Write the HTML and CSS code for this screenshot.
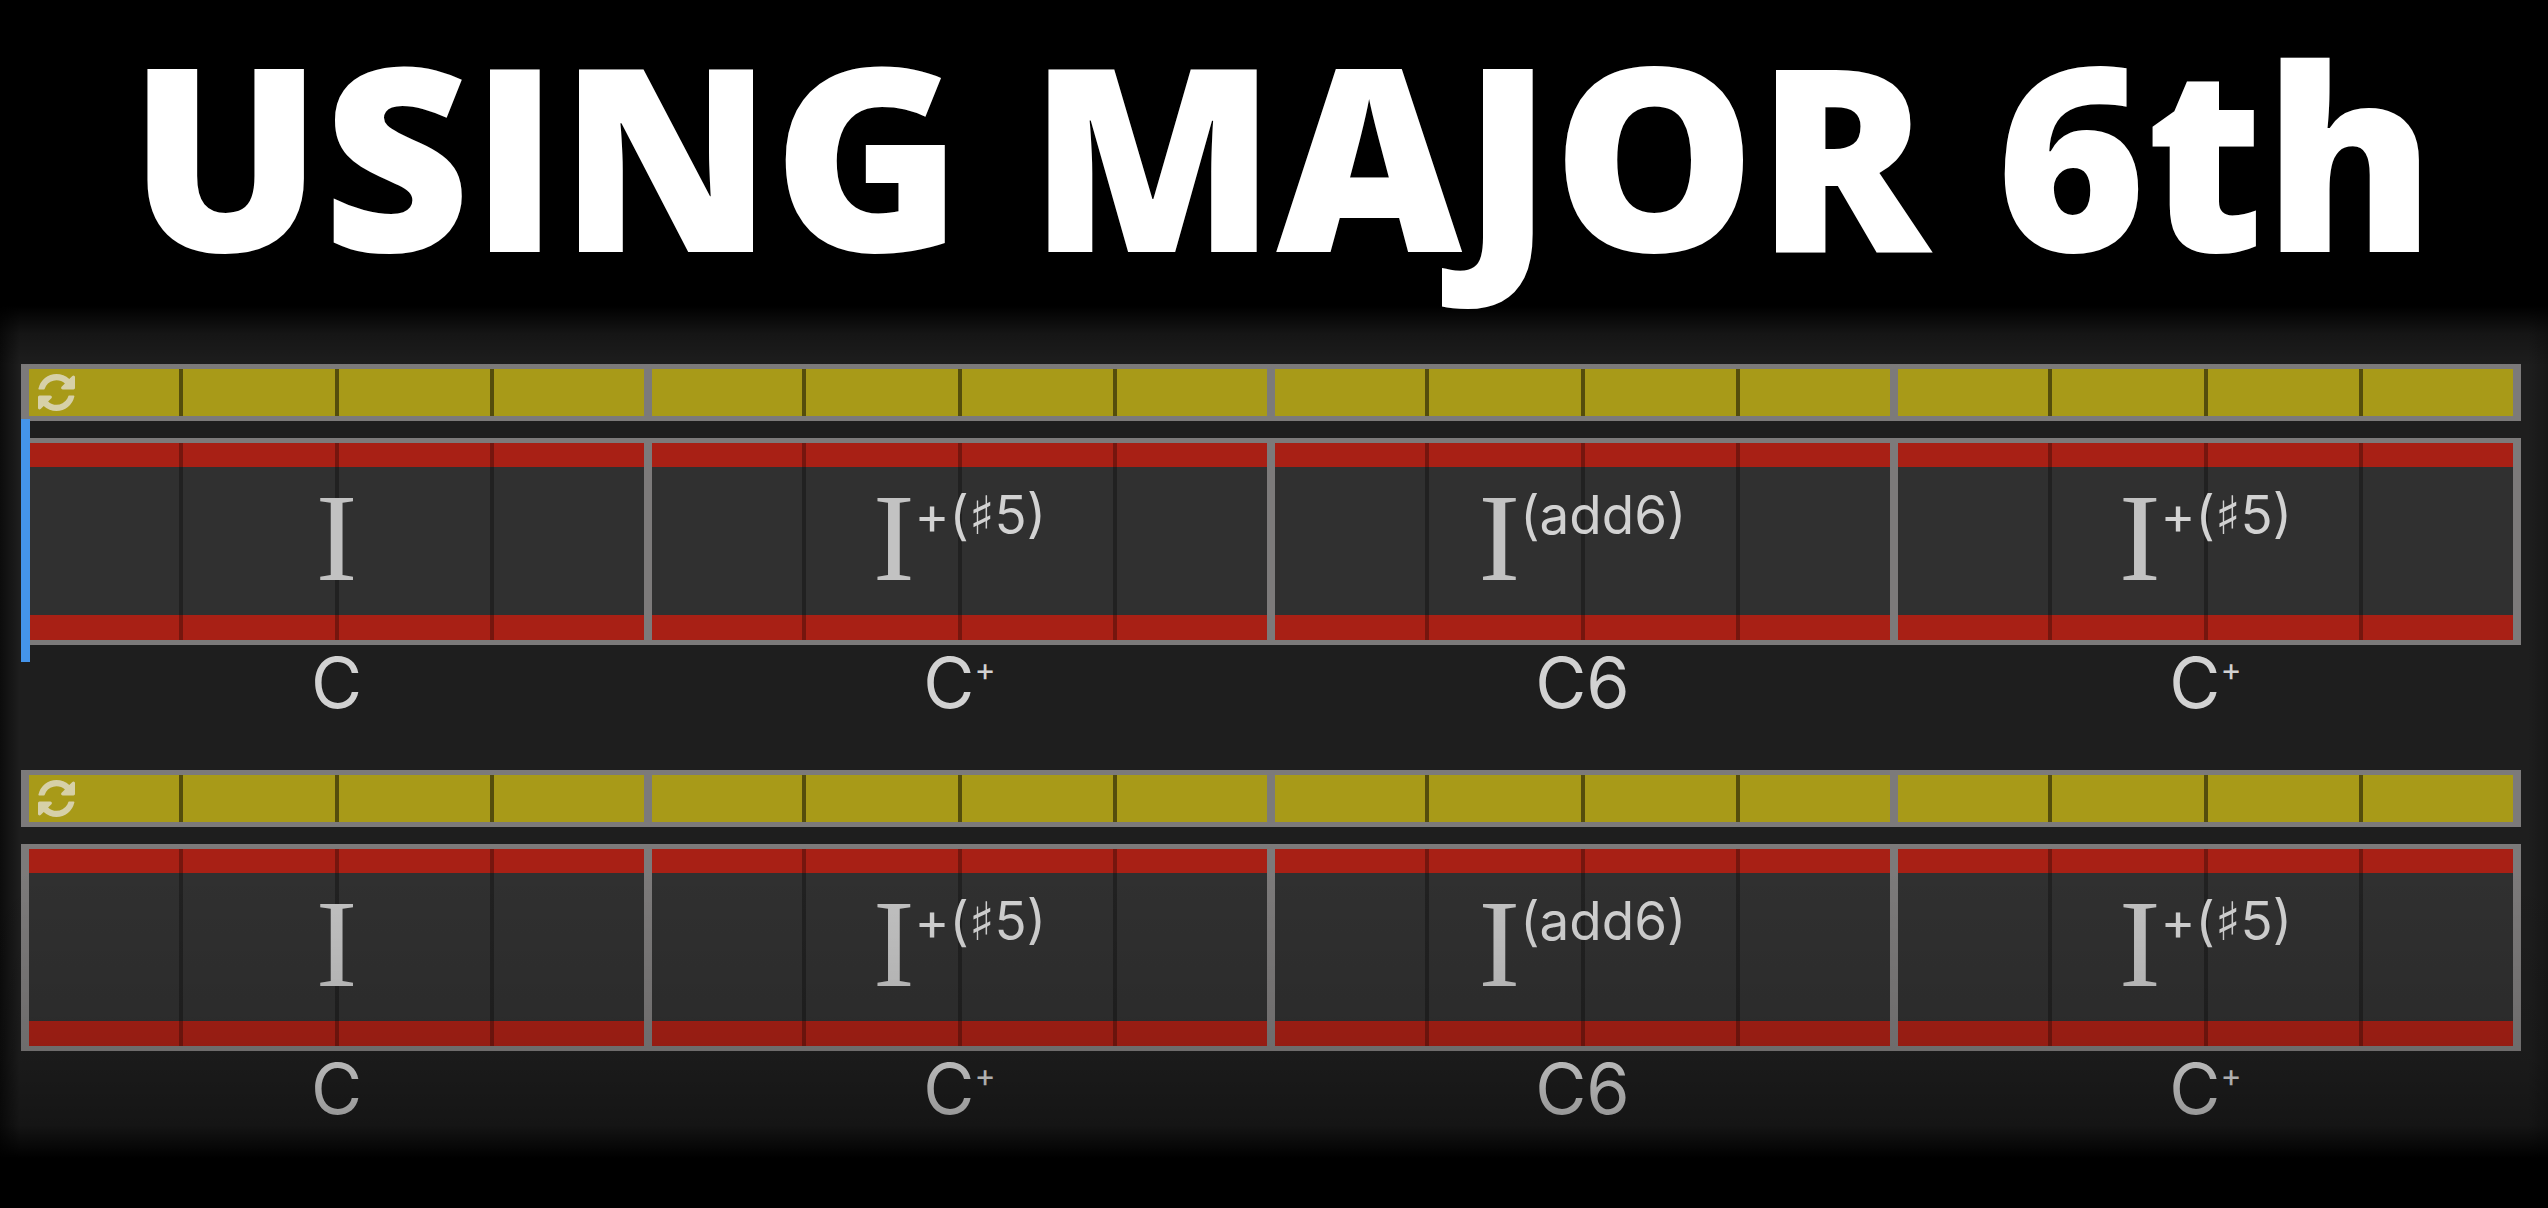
FILE: index.html
```html
<!DOCTYPE html>
<html lang="en">
<head>
<meta charset="utf-8">
<title>Using Major 6th</title>
<link rel="stylesheet" href="styles.css">
</head>
<body>
<h1 class="title">USING MAJOR 6th</h1>
<main class="panel">
  <section class="track">
    <div class="bar ruler">
      <div class="measure"><i class="beat"></i><i class="beat"></i><i class="beat"></i><i class="beat"></i>
        <button class="loop" type="button" aria-label="Loop"><svg viewBox="0 0 1536 1536" aria-hidden="true"><path d="M1511 928q0 5-1 7-64 268-268 434.500T764 1536q-146 0-282.500-55T238 1324l-129 129q-19 19-45 19t-45-19-19-45V960q0-26 19-45t45-19h448q26 0 45 19t19 45-19 45l-137 137q71 66 161 102t187 36q134 0 250-65t186-179q11-17 53-117 8-23 30-23h192q13 0 22.500 9.500t9.500 22.500zm25-800v448q0 26-19 45t-45 19h-448q-26 0-45-19t-19-45 19-45l138-138Q969 256 768 256q-134 0-250 65T332 500q-11 17-53 117-8 23-30 23H50q-13 0-22.500-9.500T18 608v-7q65-268 270-434.500T768 0q146 0 284 55.500T1297 212l130-129q19-19 45-19t45 19 19 45z"/></svg></button>
      </div>
      <div class="measure"><i class="beat"></i><i class="beat"></i><i class="beat"></i><i class="beat"></i></div>
      <div class="measure"><i class="beat"></i><i class="beat"></i><i class="beat"></i><i class="beat"></i></div>
      <div class="measure"><i class="beat"></i><i class="beat"></i><i class="beat"></i><i class="beat"></i></div>
    </div>
    <div class="bar chords">
      <div class="measure"><i class="beat"></i><i class="beat"></i><i class="beat"></i><i class="beat"></i><p class="numeral">I</p></div>
      <div class="measure"><i class="beat"></i><i class="beat"></i><i class="beat"></i><i class="beat"></i><p class="numeral">I<sup>+(♯5)</sup></p></div>
      <div class="measure"><i class="beat"></i><i class="beat"></i><i class="beat"></i><i class="beat"></i><p class="numeral">I<sup>(add6)</sup></p></div>
      <div class="measure"><i class="beat"></i><i class="beat"></i><i class="beat"></i><i class="beat"></i><p class="numeral">I<sup>+(♯5)</sup></p></div>
    </div>
    <div class="names"><p>C</p><p>C<sup>+</sup></p><p>C6</p><p>C<sup>+</sup></p></div>
    <div class="playhead"></div>
  </section>
  <section class="track">
    <div class="bar ruler">
      <div class="measure"><i class="beat"></i><i class="beat"></i><i class="beat"></i><i class="beat"></i>
        <button class="loop" type="button" aria-label="Loop"><svg viewBox="0 0 1536 1536" aria-hidden="true"><path d="M1511 928q0 5-1 7-64 268-268 434.500T764 1536q-146 0-282.500-55T238 1324l-129 129q-19 19-45 19t-45-19-19-45V960q0-26 19-45t45-19h448q26 0 45 19t19 45-19 45l-137 137q71 66 161 102t187 36q134 0 250-65t186-179q11-17 53-117 8-23 30-23h192q13 0 22.500 9.500t9.500 22.500zm25-800v448q0 26-19 45t-45 19h-448q-26 0-45-19t-19-45 19-45l138-138Q969 256 768 256q-134 0-250 65T332 500q-11 17-53 117-8 23-30 23H50q-13 0-22.500-9.500T18 608v-7q65-268 270-434.500T768 0q146 0 284 55.500T1297 212l130-129q19-19 45-19t45 19 19 45z"/></svg></button>
      </div>
      <div class="measure"><i class="beat"></i><i class="beat"></i><i class="beat"></i><i class="beat"></i></div>
      <div class="measure"><i class="beat"></i><i class="beat"></i><i class="beat"></i><i class="beat"></i></div>
      <div class="measure"><i class="beat"></i><i class="beat"></i><i class="beat"></i><i class="beat"></i></div>
    </div>
    <div class="bar chords">
      <div class="measure"><i class="beat"></i><i class="beat"></i><i class="beat"></i><i class="beat"></i><p class="numeral">I</p></div>
      <div class="measure"><i class="beat"></i><i class="beat"></i><i class="beat"></i><i class="beat"></i><p class="numeral">I<sup>+(♯5)</sup></p></div>
      <div class="measure"><i class="beat"></i><i class="beat"></i><i class="beat"></i><i class="beat"></i><p class="numeral">I<sup>(add6)</sup></p></div>
      <div class="measure"><i class="beat"></i><i class="beat"></i><i class="beat"></i><i class="beat"></i><p class="numeral">I<sup>+(♯5)</sup></p></div>
    </div>
    <div class="names"><p>C</p><p>C<sup>+</sup></p><p>C6</p><p>C<sup>+</sup></p></div>
  </section>
</main>
</body>
</html>
```
FILE: styles.css
```css
* { box-sizing: border-box; }

body {
  margin: 0;
  min-height: 100vh;
  background: #000;
  color: #d2d2d2;
  font-family: Inter, "DejaVu Sans", sans-serif;
}

p { margin: 0; }

.title {
  position: relative;
  z-index: 1;
  margin: 0;
  padding-left: 16px;
  color: #fff;
  font: 800 256px/306px "Open Sans", sans-serif;
  text-align: center;
  white-space: nowrap;
}

.panel {
  position: relative;
  display: flex;
  flex-direction: column;
  gap: 50px;
  padding: 58px 27px 44px 21px;
  background: #1e1e1e;
}

/* Fades the panel into the black page on every side */
.panel::after {
  content: "";
  position: absolute;
  inset: 0;
  pointer-events: none;
  background:
    linear-gradient(to bottom, #000, rgba(0, 0, 0, 0.300) 28px, transparent 60px),
    linear-gradient(to top, #000, #000 12px, rgba(0, 0, 0, 0.300) 45px, rgba(0, 0, 0, 0.120) 110px, transparent 300px),
    linear-gradient(to right, rgba(0, 0, 0, 0.600), transparent 20px),
    linear-gradient(to left, rgba(0, 0, 0, 0.250), transparent 20px);
}

.track { position: relative; }

.bar {
  display: grid;
  grid-template-columns: repeat(4, minmax(0, 1fr));
  border: solid #7c7a7a;
  border-width: 5px 4px;
}

.ruler { height: 57px; margin-bottom: 17px; }
.chords { height: 207px; }

.measure {
  display: grid;
  grid-template: 100% / repeat(4, minmax(0, 1fr));
}

.beat {
  grid-row: 1;
  border: solid rgba(0, 0, 0, 0.300);
  border-width: 0 2px;
}

.ruler .beat { background-color: #a89a18; border-color: rgba(0, 0, 0, 0.500); }

.chords .beat {
  background: linear-gradient(#a82015 24px, #303030 24px, #303030 calc(100% - 25px), #a82015 calc(100% - 25px));
}

.measure .beat:nth-child(1) { grid-column: 1; border-left: 4px solid #7c7a7a; }
.measure .beat:nth-child(2) { grid-column: 2; }
.measure .beat:nth-child(3) { grid-column: 3; }
.measure .beat:nth-child(4) { grid-column: 4; border-right: 4px solid #7c7a7a; }

.loop {
  grid-area: 1 / 1;
  place-self: center start;
  width: 37px;
  height: 37px;
  margin: 0 0 0 13px;
  padding: 0;
  border: 0;
  background: none;
}

.loop svg { display: block; width: 100%; fill: #d6d0a8; }

.numeral {
  grid-area: 1 / 1 / 2 / -1;
  color: #c2c2c2;
  font: 125px/190px "Liberation Serif", serif;
  text-align: center;
}

.numeral sup {
  color: #d2d2d2;
  font: 53px/0 Inter, "DejaVu Sans", sans-serif;
  vertical-align: 46px;
}

.names {
  display: grid;
  grid-template-columns: repeat(4, minmax(0, 1fr));
  padding: 0 4px;
  font-size: 70px;
  line-height: 75px;
  text-align: center;
}

.names sup {
  font-size: 32px;
  line-height: 0;
  vertical-align: 27px;
}

.playhead {
  position: absolute;
  top: 55px;
  left: 0;
  width: 9px;
  height: 243px;
  background: #4494ea;
}
```
